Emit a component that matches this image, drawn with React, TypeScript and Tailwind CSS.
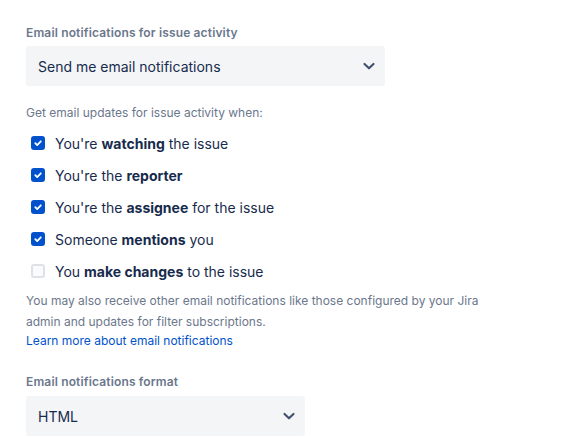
import { useState } from 'react'

const ROWS: { pre: string; bold: string; post: string; checked: boolean }[] = [
  { pre: "You're ", bold: 'watching', post: ' the issue', checked: true },
  { pre: "You're the ", bold: 'reporter', post: '', checked: true },
  { pre: "You're the ", bold: 'assignee', post: ' for the issue', checked: true },
  { pre: 'Someone ', bold: 'mentions', post: ' you', checked: true },
  { pre: 'You ', bold: 'make changes', post: ' to the issue', checked: false },
]

function Chevron() {
  return (
    <svg width="24" height="24" viewBox="0 0 24 24" className="text-[#42526E]">
      <path d="M7.5 10l4.5 4.3 4.5-4.3" stroke="currentColor" strokeWidth="2.2" fill="none" strokeLinecap="round" strokeLinejoin="round" />
    </svg>
  )
}

function Select({ value, width }: { value: string; width: string }) {
  return (
    <div className={`flex h-10 items-center justify-between rounded-[3px] bg-[#F4F5F7] pl-3 pr-[4px] ${width}`}>
      <span className="text-[14px] text-[#172B4D]">{value}</span>
      <Chevron />
    </div>
  )
}

function Check({ checked, onClick }: { checked: boolean; onClick: () => void }) {
  return (
    <button
      type="button"
      onClick={onClick}
      className={`flex h-[14px] w-[14px] items-center justify-center rounded-[3px] ${
        checked ? 'bg-[#0052CC]' : 'border-2 border-[#DFE1E6] bg-[#FAFBFC]'
      }`}
    >
      {checked && (
        <svg width="10" height="10" viewBox="0 0 10 10">
          <path d="M2.3 5.2l1.9 1.9 3.6-3.8" stroke="white" strokeWidth="1.8" fill="none" strokeLinecap="round" strokeLinejoin="round" />
        </svg>
      )}
    </button>
  )
}

export default function App() {
  const [rows, setRows] = useState(ROWS.map((r) => r.checked))
  return (
    <div className="min-h-screen bg-white pl-[26px] pt-[25px]" style={{ fontFamily: 'Inter, "Noto Sans", sans-serif' }}>
      <div className="text-[12px] font-semibold leading-4 tracking-[0.15px] text-[#6B778C]">Email notifications for issue activity</div>
      <div className="mt-[5px]">
        <Select value="Send me email notifications" width="w-[359px]" />
      </div>

      <div className="mt-[19px] text-[12px] leading-4 text-[#6B778C]">Get email updates for issue activity when:</div>
      <div className="mt-[6px] flex flex-col">
        {ROWS.map((r, i) => (
          <div key={i} className="flex h-8 items-center gap-[10px] pl-[5px]">
            <Check checked={rows[i]} onClick={() => setRows((v) => v.map((x, j) => (j === i ? !x : x)))} />
            <span className="text-[14px] text-[#172B4D]">
              {r.pre}
              <b className="font-bold">{r.bold}</b>
              {r.post}
            </span>
          </div>
        ))}
      </div>

      <p className="mt-[3px] w-[460px] text-[12px] leading-[21px] text-[#6B778C]">
        You may also receive other email notifications like those configured by your Jira admin and updates for filter
        subscriptions.
      </p>
      <a href="#" className="block text-[12px] leading-[18px] text-[#0052CC]">
        Learn more about email notifications
      </a>

      <div className="mt-[24px] text-[12px] font-semibold leading-4 tracking-[0.15px] text-[#6B778C]">Email notifications format</div>
      <div className="mt-[6px]">
        <Select value="HTML" width="w-[279px]" />
      </div>
    </div>
  )
}
